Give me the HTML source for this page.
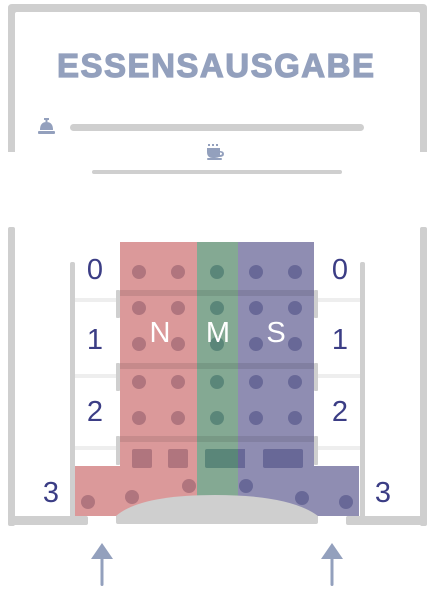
<!DOCTYPE html>
<html><head><meta charset="utf-8"><style>
html,body{margin:0;padding:0;background:#fff;width:435px;height:591px;overflow:hidden}
svg{display:block}
.n{font-family:"Liberation Sans",sans-serif;font-size:29px;fill:#3b3d85;text-anchor:middle}
.l{font-family:"Liberation Sans",sans-serif;font-size:29px;fill:#fff;text-anchor:middle}
</style></head><body>
<svg width="435" height="591" viewBox="0 0 435 591">
<path d="M8 152 V8 Q8 4 12 4 H423 Q427 4 427 8 V152 H420 V14 Q420 12 418 12 H17 Q15 12 15 14 V152 Z" fill="#cfcfcf"/>
<text x="57" y="77" font-family="Liberation Sans,sans-serif" font-weight="bold" font-size="33" fill="#93a0bd" stroke="#93a0bd" stroke-width="1.2" textLength="317" lengthAdjust="spacing">ESSENSAUSGABE</text>
<g fill="#93a0bd"><rect x="44" y="118" width="5" height="2"/><rect x="45.5" y="119" width="2" height="3"/><path d="M40 130 Q40 122 46.5 122 Q53 122 53 130 Z"/><rect x="38" y="131" width="17" height="3" rx="1"/></g>
<rect x="70" y="124" width="294" height="7" rx="3.5" fill="#cfcfcf"/>
<g fill="#93a0bd"><rect x="208" y="144" width="2" height="2"/><rect x="212" y="144" width="2" height="2"/><rect x="216" y="144" width="2" height="2"/><path d="M207 148 H220 V151 Q224 151 224 154 Q224 157 219 157 Q217 158 213 158 Q207 158 207 152Z M220 152.5 V155 Q222 155 222 153.8 Q222 152.5 220 152.5Z" fill-rule="evenodd"/><rect x="207" y="158" width="15" height="2" rx="1"/></g>
<rect x="92" y="170" width="250" height="4" rx="2" fill="#cfcfcf"/>
<rect x="8" y="227" width="7" height="299" rx="2" fill="#cfcfcf"/>
<rect x="8" y="516" width="80" height="9" rx="2" fill="#cfcfcf"/>
<rect x="420" y="227" width="7" height="299" rx="2" fill="#cfcfcf"/>
<rect x="346" y="516" width="81" height="9" rx="2" fill="#cfcfcf"/>
<rect x="70" y="262" width="5" height="256" rx="2" fill="#cfcfcf"/>
<rect x="360" y="262" width="5" height="256" rx="2" fill="#cfcfcf"/>
<g fill="#eeeeee"><rect x="75" y="298" width="285" height="4"/><rect x="75" y="374" width="285" height="4"/><rect x="75" y="446" width="285" height="4"/></g>
<rect x="120" y="242" width="77" height="274" fill="#db999a"/>
<rect x="75" y="466" width="122" height="50" fill="#db999a"/>
<rect x="197" y="242" width="41" height="274" fill="#84a993"/>
<rect x="238" y="242" width="76" height="274" fill="#8f8db2"/>
<rect x="238" y="466" width="121" height="50" fill="#8f8db2"/>
<g fill="#000" opacity="0.09"><rect x="120" y="290" width="194" height="6"/><rect x="120" y="363" width="194" height="6"/><rect x="120" y="436" width="194" height="6"/></g>
<g fill="#cfcfcf"><rect x="116" y="290" width="4" height="28" rx="1"/><rect x="314" y="290" width="4" height="28" rx="1"/><rect x="116" y="363" width="4" height="28" rx="1"/><rect x="314" y="363" width="4" height="28" rx="1"/><rect x="116" y="436" width="4" height="29" rx="1"/><rect x="314" y="436" width="4" height="29" rx="1"/></g>
<g fill="#b0757e"><circle cx="139" cy="272" r="7"/><circle cx="178" cy="272" r="7"/><circle cx="139" cy="308" r="7"/><circle cx="178" cy="308" r="7"/><circle cx="139" cy="344" r="7"/><circle cx="178" cy="344" r="7"/><circle cx="139" cy="382" r="7"/><circle cx="178" cy="382" r="7"/><circle cx="139" cy="418" r="7"/><circle cx="178" cy="418" r="7"/><rect x="132" y="449" width="20" height="19" rx="2"/><rect x="168" y="449" width="20" height="19" rx="2"/><circle cx="88" cy="502" r="7"/><circle cx="132" cy="497" r="7"/><circle cx="189" cy="486" r="7"/></g>
<g fill="#5a8679"><circle cx="217" cy="272" r="7"/><circle cx="217" cy="308" r="7"/><circle cx="217" cy="344" r="7"/><circle cx="217" cy="382" r="7"/><circle cx="217" cy="418" r="7"/><rect x="205" y="449" width="40" height="19" rx="2"/></g>
<g fill="#686897"><circle cx="256" cy="272" r="7"/><circle cx="295" cy="272" r="7"/><circle cx="256" cy="308" r="7"/><circle cx="295" cy="308" r="7"/><circle cx="256" cy="344" r="7"/><circle cx="295" cy="344" r="7"/><circle cx="256" cy="382" r="7"/><circle cx="295" cy="382" r="7"/><circle cx="256" cy="418" r="7"/><circle cx="295" cy="418" r="7"/><rect x="238" y="449" width="7" height="19"/><rect x="263" y="449" width="40" height="19" rx="2"/><circle cx="246" cy="486" r="7"/><circle cx="302" cy="498" r="7"/><circle cx="346" cy="502" r="7"/></g>
<path d="M116 516 Q140 495 215 495 Q290 495 318 516 V522 Q318 524 316 524 H118 Q116 524 116 522 Z" fill="#cfcfcf"/>
<text class="n" x="95" y="279">0</text><text class="n" x="95" y="349">1</text><text class="n" x="95" y="421">2</text><text class="n" x="51" y="502">3</text>
<text class="n" x="340" y="279">0</text><text class="n" x="340" y="349">1</text><text class="n" x="340" y="421">2</text><text class="n" x="383" y="502">3</text>
<text class="l" x="160" y="342">N</text><text class="l" x="218" y="342">M</text><text class="l" x="276" y="342">S</text>
<g fill="#93a0bd"><path d="M91 559 L102 543 L113 559 Z"/><rect x="100.5" y="556" width="3" height="30" rx="1.5"/><path d="M321 559 L332 543 L343 559 Z"/><rect x="330.5" y="556" width="3" height="30" rx="1.5"/></g>
</svg>
</body></html>
